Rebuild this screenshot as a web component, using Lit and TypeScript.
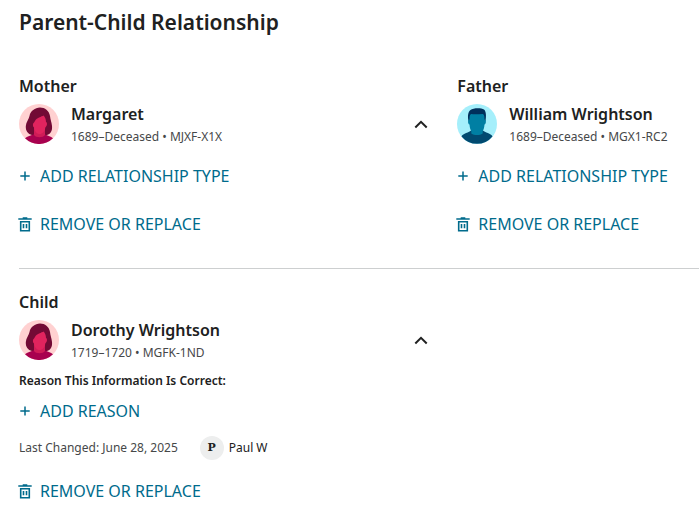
import { LitElement, html, css, svg, nothing } from "lit";
import { customElement, property } from "lit/decorators.js";

const plusIcon = html`<svg class="icon" viewBox="1 0 12 16" aria-hidden="true">
  <path d="M7 3.500V12.500M2.300 8H11.700" fill="none" stroke="currentColor" stroke-width="1.500" />
</svg>`;

const trashIcon = html`<svg class="icon" viewBox="1 0 12 16" aria-hidden="true">
  <path
    d="M0.300 3H13.700M4.700 2H9.300M2.700 5.700H11.300V14.700H2.700ZM5.500 8V12.300M8.500 8V12.300"
    fill="none"
    stroke="currentColor"
    stroke-width="1.600"
  />
</svg>`;

const woman = svg`
  <circle cx="20" cy="20" r="20" fill="#ffd1d1" />
  <path d="M21 3.500C16 4 11.500 6.500 10.500 12C10 15 7 18 6.800 22C6.500 27 9 30 13 31H28C31.500 30 33.500 27 33 22C32.500 18 31.500 16 31 12C30 6.500 26 3.500 21 3.500Z" fill="#720a35" />
  <path d="M6 34.300C8 32 12 31.800 15.500 30H25C28 31.800 32 32 34 34.300A20 20 0 0 1 6 34.300Z" fill="#a8014f" />
  <path d="M15 23H26V31C24 34 17 34 15 31Z" fill="#cf1c57" />
  <path d="M24.500 11.500C23 12.500 17 14 16 17L15 18.500C13.500 19.500 13.500 22.500 15 23.500C15.500 27 17.500 30 20.500 30C23.500 30 25.800 27.500 26.300 23.500C28.300 22 28.500 18.500 27 18C27 15 26 13 24.500 11.500Z" fill="#e0245e" />`;

const man = svg`
  <circle cx="20" cy="20" r="20" fill="#a5effb" />
  <path d="M4.500 32.500C6 29 12 29 14.500 26H25.500C28 29 34 29 35.500 32.500A20 20 0 0 1 4.500 32.500Z" fill="#014a70" />
  <path d="M11.500 17C10.500 12 11 8 13.500 6C16 3.800 24 3.500 27 5.500C29.300 7.500 29.300 12 28.500 17Z" fill="#00305c" />
  <path d="M12.500 15.500C12.500 13 12.500 11 14 10C18 10.800 22 10 26 10C27.500 11 27.500 13 27.500 15.500C29.500 15.500 29.300 20 27.500 20.500C27.300 23.500 26.800 25.500 25.700 27V29.500C22.500 31.500 17.500 31.500 14.300 29.500V27C13.200 25.500 12.700 23.500 12.500 20.500C10.700 20 10.500 15.500 12.500 15.500Z" fill="#007fa3" />`;

@customElement("action-button")
class ActionButton extends LitElement {
  @property() label = "";
  @property() icon = "plus";

  static styles = css`
    :host {
      display: block;
    }
    .action {
      display: inline-flex;
      align-items: center;
      gap: 9px;
      height: 40px;
      padding: 0;
      border: 0;
      background: none;
      color: #006b8c;
      font: 400 16px/24px "Noto Sans", sans-serif;
      text-transform: uppercase;
      white-space: nowrap;
      cursor: pointer;
    }
    .icon {
      width: 12px;
      height: 16px;
      flex: none;
      overflow: visible;
    }
  `;

  render() {
    return html`<button class="action" type="button">
      ${this.icon === "trash" ? trashIcon : plusIcon}<span>${this.label}</span>
    </button>`;
  }
}

@customElement("person-row")
class PersonRow extends LitElement {
  @property() name = "";
  @property() details = "";
  @property() portrait = "woman";
  @property({ type: Boolean }) collapsible = false;

  static styles = css`
    :host {
      display: flex;
      align-items: flex-start;
      gap: 12px;
    }
    .avatar,
    .toggle {
      height: 40px;
      flex: none;
      margin-top: 2px;
    }
    .avatar {
      width: 40px;
    }
    .text {
      flex: 1;
      white-space: nowrap;
    }
    .name {
      font-size: 16px;
      line-height: 24px;
      font-weight: 600;
      color: #202121;
    }
    .details {
      font-size: 12px;
      line-height: 22px;
      color: #464849;
    }
    .toggle {
      display: flex;
      align-items: center;
      padding: 0 4px;
      border: 0;
      background: none;
      color: #202121;
      cursor: pointer;
    }
    .chevron {
      width: 16px;
      height: 16px;
    }
  `;

  render() {
    return html`
      <svg class="avatar" viewBox="0 0 40 40" aria-hidden="true">
        ${this.portrait === "man" ? man : woman}
      </svg>
      <div class="text">
        <div class="name">${this.name}</div>
        <div class="details">${this.details}</div>
      </div>
      ${this.collapsible
        ? html`<button class="toggle" type="button" aria-expanded="true" aria-label="Collapse ${this.name}">
            <svg class="chevron" viewBox="0 0 16 16" aria-hidden="true">
              <path d="M2.300 11.500L8 5.800L13.700 11.500" fill="none" stroke="currentColor" stroke-width="2" />
            </svg>
          </button>`
        : nothing}
    `;
  }
}

@customElement("app-root")
class AppRoot extends LitElement {
  static styles = css`
    :host {
      display: block;
      padding: 8px 0 8px 19px;
      background: #fff;
      color: #202121;
      font-family: "Noto Sans", sans-serif;
    }
    .title,
    .role {
      margin: 0;
      font-weight: 600;
    }
    .title {
      font-size: 21px;
      line-height: 28px;
      margin-bottom: 38px;
    }
    .role {
      font-size: 16px;
      line-height: 24px;
      margin-bottom: 4px;
    }
    .couple,
    .children {
      display: grid;
      grid-template-columns: minmax(0, 12fr) minmax(0, 7fr);
      column-gap: 24px;
    }
    .couple {
      padding-bottom: 24px;
      border-bottom: 1px solid #cdcfd0;
    }
    .children {
      padding-top: 21px;
    }
    .actions {
      display: grid;
      gap: 8px;
      padding-top: 8px;
    }
    .reason {
      margin: 7px 0 0;
      font-size: 12px;
      line-height: 20px;
      font-weight: 600;
    }
    .changed {
      display: flex;
      align-items: center;
      gap: 22px;
      margin: 5px 0 11px;
      font-size: 12px;
      line-height: 24px;
      color: #464849;
    }
    .contributor {
      display: flex;
      gap: 5px;
      color: #202121;
    }
    .initial {
      width: 24px;
      height: 24px;
      border-radius: 50%;
      background: #edeeee;
      font-family: "DejaVu Serif", serif;
      font-size: 11px;
      font-weight: 600;
      text-align: center;
    }
  `;

  render() {
    return html`
      <h1 class="title">Parent-Child Relationship</h1>
      <div class="couple">
        <section>
          <h2 class="role">Mother</h2>
          <person-row name="Margaret" details="1689–Deceased • MJXF-X1X" collapsible></person-row>
          <div class="actions">
            <action-button label="Add Relationship Type"></action-button>
            <action-button icon="trash" label="Remove or Replace"></action-button>
          </div>
        </section>
        <section>
          <h2 class="role">Father</h2>
          <person-row portrait="man" name="William Wrightson" details="1689–Deceased • MGX1-RC2"></person-row>
          <div class="actions">
            <action-button label="Add Relationship Type"></action-button>
            <action-button icon="trash" label="Remove or Replace"></action-button>
          </div>
        </section>
      </div>
      <div class="children">
        <section>
          <h2 class="role">Child</h2>
          <person-row name="Dorothy Wrightson" details="1719–1720 • MGFK-1ND" collapsible></person-row>
          <h3 class="reason">Reason This Information Is Correct:</h3>
          <action-button label="Add Reason"></action-button>
          <div class="changed">
            <span>Last Changed: June 28, 2025</span>
            <span class="contributor"><span class="initial">P</span>Paul W</span>
          </div>
          <action-button icon="trash" label="Remove or Replace"></action-button>
        </section>
      </div>
    `;
  }
}
